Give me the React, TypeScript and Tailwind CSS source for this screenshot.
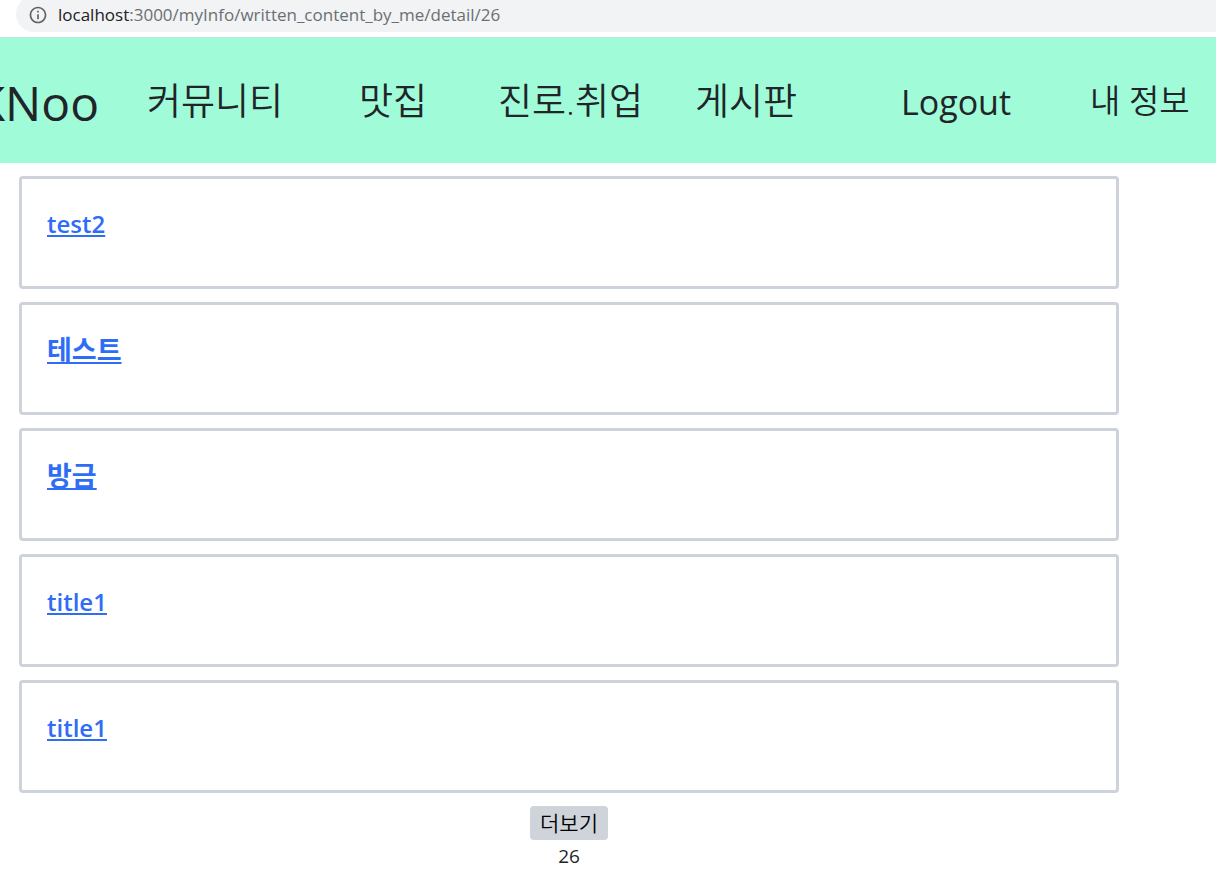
import React, { useState } from "react";
import { MdInfoOutline } from "react-icons/md";

const menus = [
  { label: "커뮤니티", href: "/community", style: "text-[37px] font-[350]" },
  { label: "맛집", href: "/restaurant", style: "text-[37px] font-[350]" },
  { label: "진로.취업", href: "/career", style: "text-[37px] font-[350]" },
  { label: "게시판", href: "/board", style: "text-[37px] font-[350]" },
  { label: "Logout", href: "/logout", style: "pt-1 text-[34px]" },
  { label: "내 정보", href: "/myInfo", style: "text-[33px] font-[350]" },
];

const posts = [
  { id: 30, title: "test2", size: "text-[24px] font-semibold" },
  { id: 29, title: "테스트", size: "text-[27px] font-bold" },
  { id: 28, title: "방금", size: "text-[27px] font-bold" },
  { id: 27, title: "title1", size: "text-[24px] font-semibold" },
  { id: 26, title: "title1", size: "text-[24px] font-semibold" },
];

const AddressBar: React.FC = () => {
  const [path, setPath] = useState(":3000/myInfo/written_content_by_me/detail/26");

  return (
    <div className="h-[37px] overflow-hidden pl-4">
      <label className="-mt-1 flex h-9 items-center rounded-l-full bg-[#f1f3f4] pt-0.5 pl-3 text-[17px]">
        <MdInfoOutline className="mr-2.5 h-5 w-5 text-[#5f6368]" />
        <span className="text-[#202124]">localhost</span>
        <input
          aria-label="주소"
          value={path}
          onChange={(e) => setPath(e.target.value)}
          className="min-w-0 flex-1 bg-transparent text-[#6b6f73] outline-none"
        />
      </label>
    </div>
  );
};

const Header: React.FC = () => (
  <header className="grid h-[126px] grid-cols-[147fr_212fr_139fr_197fr_206fr_189fr_126fr] items-center border-t border-[#c4e6d9] bg-[#a0fcd8] text-[#212529]">
    <a href="/" className="mr-12 flex justify-end overflow-hidden pt-1 text-[48px]">
      KNoo
    </a>
    {menus.map((menu) => (
      <a key={menu.label} href={menu.href} className={`whitespace-nowrap ${menu.style}`}>
        {menu.label}
      </a>
    ))}
  </header>
);

export default function App() {
  return (
    <div className="min-h-screen bg-white font-['Open_Sans','Noto_Sans_CJK_KR',sans-serif] text-[#212529]">
      <AddressBar />
      <Header />

      <main className="mr-[97px] ml-[19px] flex flex-col items-center pt-[13px]">
        <ul className="flex w-full flex-col gap-[13px]">
          {posts.map((post) => (
            <li key={post.id} className="h-[113px] rounded border-3 border-[#ced2da] px-[25px] pt-[27px]">
              <a
                href={`/board/${post.id}`}
                className={`leading-9 text-[#2f6df6] underline decoration-2 underline-offset-2 ${post.size}`}
              >
                {post.title}
              </a>
            </li>
          ))}
        </ul>

        <button
          type="button"
          className="mt-[13px] h-[34px] rounded bg-[#ced4da] px-2.5 text-[21px] leading-8 font-[350] text-black"
        >
          더보기
        </button>
        <p className="text-[19px] leading-8">26</p>
      </main>
    </div>
  );
}
